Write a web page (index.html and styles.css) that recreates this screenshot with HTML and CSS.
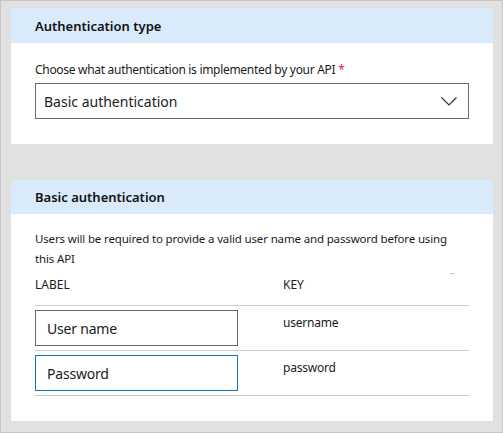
FILE: index.html
```html
<!DOCTYPE html>
<html>
<head>
<meta charset="utf-8">
<link rel="stylesheet" href="styles.css">
</head>
<body>
<div class="frame">
  <section class="card card-type">
    <div class="card-head">Authentication type</div>
    <div class="card-body">
      <div class="field-label">Choose what authentication is implemented by your API <span class="req">*</span></div>
      <div class="select">
        <span class="select-text">Basic authentication</span>
        <svg class="chev" width="16" height="9" viewBox="0 0 16 9"><path d="M0.5 0.5 L8 8 L15.5 0.5" fill="none" stroke="#333" stroke-width="1.2"/></svg>
      </div>
    </div>
  </section>
  <section class="card card-basic">
    <div class="card-head">Basic authentication</div>
    <div class="card-body">
      <p class="desc">Users will be required to provide a valid user name and password before using this API</p>
      <div class="thead">
        <span class="col-label">LABEL</span>
        <span class="col-key">KEY</span>
        <span class="tick"></span>
      </div>
      <div class="trow">
        <div class="col-label"><div class="input">User name</div></div>
        <div class="col-key key-text">username</div>
      </div>
      <div class="trow">
        <div class="col-label"><div class="input focused">Password</div></div>
        <div class="col-key key-text">password</div>
      </div>
    </div>
  </section>
</div>
</body>
</html>
```

FILE: styles.css
```css
* { box-sizing: border-box; }
html, body { margin: 0; padding: 0; }
body {
  font-family: "Noto Sans", "Open Sans", sans-serif;
  color: #1b1b1b;
}
.frame {
  width: 503px;
  height: 433px;
  border: 1px solid #c6c6c6;
  background: #e1e1e1;
  padding: 7px 9px 0 10px;
  display: flex;
  flex-direction: column;
  gap: 36px;
}
.card {
  background: #fff;
}
.card-head {
  background: #d9eafb;
  height: 35px;
  display: flex;
  align-items: center;
  padding-left: 24px;
  font-weight: 600;
  font-size: 13px;
  color: #111;
}
.card-basic .card-head { height: 34px; }
.card-body {
  padding: 0 24px 25px;
}
.card-type .card-body { padding-top: 19px; }
.field-label {
  font-size: 12px;
  line-height: 16px;
  height: 21px;
  letter-spacing: -0.3px;
}
.req { color: #e0245e; }
.select {
  height: 36px;
  border: 1px solid #6b6b6b;
  display: flex;
  align-items: center;
  justify-content: space-between;
  padding: 0 11px 0 8px;
  font-size: 14px;
}
.chev { display: block; margin-top: 1px; }
.card-basic .card-body { padding-top: 15px; }
.desc {
  margin: 0;
  font-size: 11.5px;
  line-height: 20px;
  letter-spacing: -0.15px;
  max-width: 425px;
}
.thead {
  display: flex;
  font-size: 12px;
  height: 36px;
  align-items: flex-start;
  padding-top: 7px;
  position: relative;
}
.col-label { width: 248px; flex: none; }
.col-key { flex: 1; }
.tick {
  width: 5px;
  height: 1px;
  background: #c8c8c8;
  margin-top: -3px;
  margin-right: 14px;
}
.trow {
  display: flex;
  border-top: 1px solid #cccccc;
  padding: 4px 0;
}
.trow:last-child { border-bottom: 1px solid #cccccc; }
.input {
  width: 203px;
  height: 36px;
  border: 1px solid #666;
  display: flex;
  align-items: center;
  padding-left: 11px;
  font-size: 14px;
  letter-spacing: -0.2px;
}
.input.focused { border-color: #0078d4; }
.key-text {
  font-size: 12px;
  padding-top: 4px;
  letter-spacing: -0.2px;
}
```
